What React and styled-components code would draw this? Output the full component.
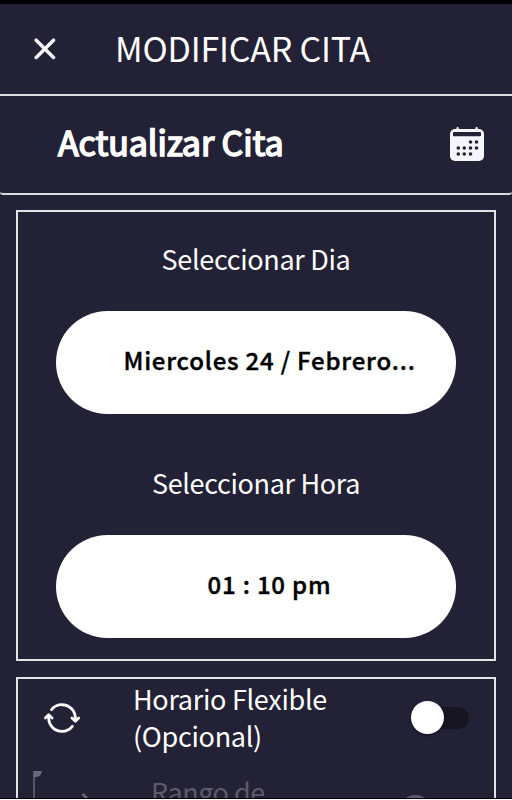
import styled, { createGlobalStyle } from "styled-components";
import { IoSyncOutline } from "react-icons/io5";

const GlobalStyle = createGlobalStyle`
  * {
    box-sizing: border-box;
  }
  body {
    margin: 0;
    background: #232135;
    font-family: "Noto Sans CJK SC", "Noto Sans", sans-serif;
    color: #fff;
  }
  h1, h2, p {
    margin: 0;
  }
`;

const Screen = styled.div`
  width: 512px;
  height: 800px;
  display: flex;
  flex-direction: column;
  overflow: hidden;
  background: #232135;
  border-top: 4px solid #000;
`;
const Header = styled.header`
  flex: none;
  height: 92px;
  display: flex;
  align-items: center;
  padding-left: 34px;
  border-bottom: 2px solid #dddce2;
`;
const CloseButton = styled.button`
  display: flex;
  width: 22px;
  padding: 0;
  border: 0;
  background: none;
`;
const HeaderTitle = styled.h1`
  margin-left: 59px;
  padding-bottom: 2px;
  font-size: 34px;
  font-weight: 400;
  line-height: 50px;
  letter-spacing: -0.2px;
  white-space: nowrap;
`;
const SubHeader = styled.div`
  flex: none;
  height: 99px;
  display: flex;
  align-items: center;
  justify-content: space-between;
  padding: 0 28px 1px 58px;
  border-bottom: 2px solid #dddce2;
  border-radius: 0 0 3px 3px;
`;
const SubTitle = styled.h2`
  padding-bottom: 4px;
  font-size: 34px;
  font-weight: 400;
  line-height: 46px;
  letter-spacing: -0.08px;
  white-space: nowrap;
  -webkit-text-stroke: 1.6px #fff;
`;
const Content = styled.main`
  flex: 1;
  min-height: 0;
  display: flex;
  flex-direction: column;
  gap: 16px;
  padding: 15px 16px 0;
  overflow: hidden;
`;
const Card = styled.section`
  flex: none;
  height: ${({ $height }) => $height}px;
  border: 2px solid #e4e3e6;
`;
const Field = styled.div`
  height: 224px;
  padding: 26px 38px 0;
`;
const Label = styled.p`
  height: 73px;
  font-size: 27px;
  line-height: 42px;
  letter-spacing: -0.33px;
  text-align: center;
  white-space: nowrap;
`;
const Pill = styled.button`
  display: block;
  width: 400px;
  height: 103px;
  padding: 0 38px 6px 65px;
  border: 0;
  border-radius: 52px;
  background: #fff;
  color: #000;
  font-family: inherit;
  font-size: 24px;
  font-weight: 500;
  letter-spacing: 0.8px;
  text-align: center;
  white-space: nowrap;
  -webkit-text-stroke: 0.4px #000;
`;
const FlexRow = styled.div`
  height: 77px;
  display: flex;
  align-items: center;
  padding: 0 25px;
`;
const SyncIcon = styled(IoSyncOutline)`
  path,
  polyline {
    stroke-width: 38px;
  }
`;
const RowText = styled.p`
  width: 280px;
  margin-left: 52px;
  padding-bottom: 2px;
  font-size: 27px;
  line-height: 37px;
  letter-spacing: -0.3px;
`;
const Track = styled.div`
  width: 56px;
  height: 22px;
  display: flex;
  align-items: center;
  border-radius: 11px;
  background: #171520;
`;
const Thumb = styled.div`
  flex: none;
  width: 33px;
  height: 33px;
  margin-left: -2px;
  border-radius: 50%;
  background: ${({ $color }) => $color};
  box-shadow: 0 2px 3px rgba(0, 0, 0, 0.3);
`;
const RangeRow = styled.div`
  display: flex;
  align-items: flex-start;
  padding: 15px 0 0 14px;
`;
const RangeText = styled.p`
  width: 250px;
  margin-left: 63px;
  font-size: 27px;
  line-height: 41px;
  letter-spacing: -0.5px;
  color: #5d5b69;
`;
const RangeSwitch = styled.div`
  padding-top: 24px;
`;
const Footer = styled.div`
  flex: none;
  height: 2px;
  background: #fff;
  border-top: 1px solid #000;
`;

const CloseIcon = () => (
  <svg width="22" height="22" viewBox="0 0 22 22" fill="none" stroke="#f4f5fa" strokeWidth="3.5" strokeLinecap="round">
    <path d="M2.2 2.2L19.5 19.5M19.5 2.2L2.2 19.5" />
  </svg>
);

const dots = [[20.5, 15], [26.5, 15], [8.3, 21], [14.3, 21], [20.5, 21], [26.5, 21], [8.3, 27], [14.3, 27], [20.5, 27]];

const CalendarIcon = () => (
  <svg width="34" height="34" viewBox="0 0 34 34">
    <path d="M7.6 1.2V4M26.6 1.2V4" stroke="#f4f5fa" strokeWidth="2.4" strokeLinecap="round" />
    <rect y="2" width="34" height="32" rx="5" fill="#f4f5fa" />
    <rect x="3" y="5" width="28" height="4.3" rx="1" fill="#232135" />
    {dots.map(([x, y]) => (
      <circle key={`${x}-${y}`} cx={x} cy={y} r="1.8" fill="#232135" />
    ))}
  </svg>
);

const RangeIcon = () => (
  <svg width="56" height="40" viewBox="0 0 56 40" fill="none" stroke="#6b6975" strokeWidth="1.5">
    <path d="M2 0V40" />
    <path d="M2 0H10Q9 6.5 2 6.5Z" fill="#6b6975" stroke="none" />
    <path d="M50.5 23L57 29" strokeWidth="2.5" />
  </svg>
);

export default function App() {
  return (
    <>
      <GlobalStyle />
      <Screen>
        <Header>
          <CloseButton>
            <CloseIcon />
          </CloseButton>
          <HeaderTitle>MODIFICAR CITA</HeaderTitle>
        </Header>
        <SubHeader>
          <SubTitle>Actualizar Cita</SubTitle>
          <CalendarIcon />
        </SubHeader>
        <Content>
          <Card $height={451}>
            <Field>
              <Label>Seleccionar Dia</Label>
              <Pill>Miercoles 24 / Febrero...</Pill>
            </Field>
            <Field>
              <Label>Seleccionar Hora</Label>
              <Pill>01 : 10 pm</Pill>
            </Field>
          </Card>
          <Card $height={300}>
            <FlexRow>
              <SyncIcon size={38} />
              <RowText>
                Horario Flexible
                <br />
                (Opcional)
              </RowText>
              <Track>
                <Thumb $color="#fff" />
              </Track>
            </FlexRow>
            <RangeRow>
              <RangeIcon />
              <RangeText>Rango de</RangeText>
              <RangeSwitch>
                <Thumb $color="#5f5b76" />
              </RangeSwitch>
            </RangeRow>
          </Card>
        </Content>
        <Footer />
      </Screen>
    </>
  );
}
